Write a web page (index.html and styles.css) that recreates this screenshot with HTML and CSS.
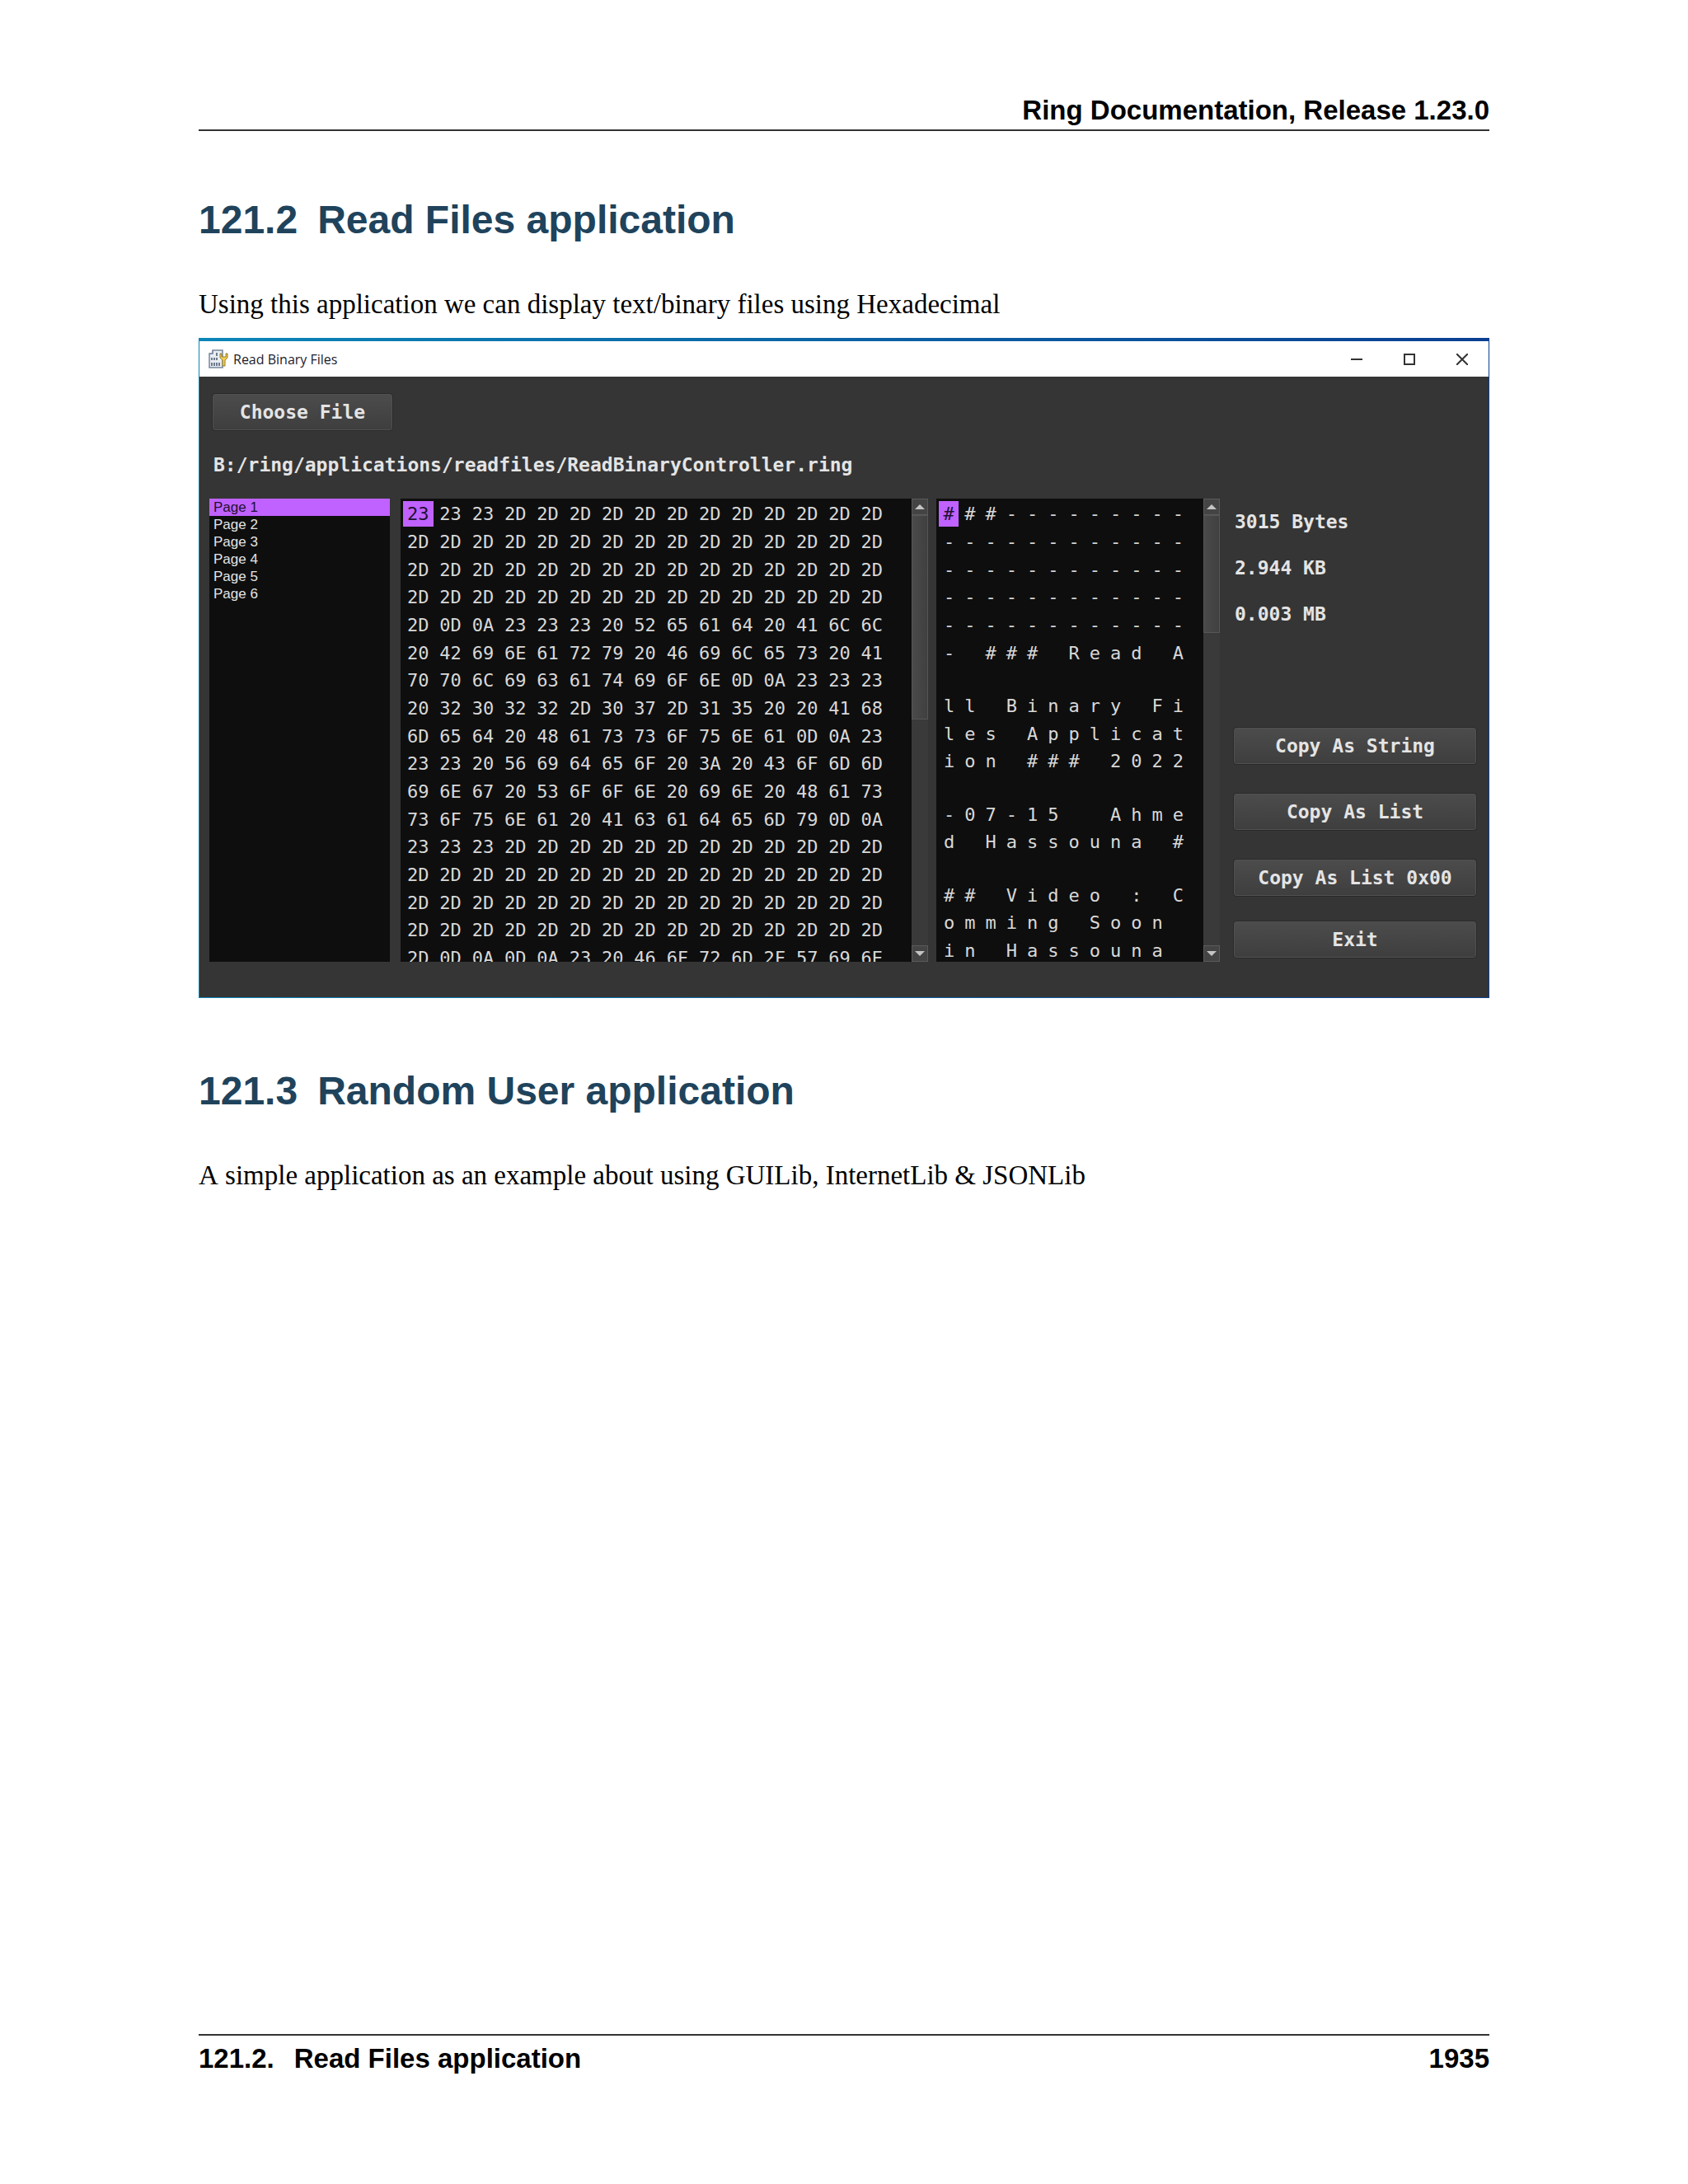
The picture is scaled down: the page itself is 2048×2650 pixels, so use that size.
FILE: index.html
```html
<!DOCTYPE html>
<html lang="en">
<head>
<meta charset="utf-8">
<title>Ring Documentation, Release 1.23.0</title>
<link rel="stylesheet" href="styles.css">
</head>
<body>
<div class="page">
  <header class="page-header">Ring Documentation, Release 1.23.0</header>
  <main class="content">
    <section>
      <h2><span class="number">121.2</span>Read Files application</h2>
      <p>Using this application we can display text/binary files using Hexadecimal</p>
      <div class="window">
        <div class="titlebar">
          <svg class="app-icon" viewBox="0 0 24 24" width="24" height="24" aria-hidden="true">
            <path d="M5 1h12v21H1V5h4z" fill="#e9edf3" stroke="#76869c" stroke-width="1.5"/>
            <path d="M1 5h4V1" fill="none" stroke="#76869c"/>
            <path d="M10 4v4M4 10v3M7 10v3M10 10v3M4 16v4M7 16v4M10 16v4M13 16v4" stroke="#46566b" stroke-width="1.5"/>
            <path d="M14 5v5l3 3v7h3v-7l3-3V5h-2v4h-5V5z" fill="#f2cf4a" stroke="#927c36"/>
          </svg>
          <span class="title">Read Binary Files</span>
          <button class="caption" aria-label="Minimize"><svg viewBox="0 0 14 14" width="14" height="14"><path d="M0 7h14"/></svg></button>
          <button class="caption" aria-label="Maximize"><svg viewBox="0 0 14 14" width="14" height="14"><path d="M1 1h12v12H1z"/></svg></button>
          <button class="caption" aria-label="Close"><svg viewBox="0 0 14 14" width="14" height="14"><path d="M0 0l14 14M14 0L0 14"/></svg></button>
        </div>
        <div class="client">
          <button class="push choose">Choose File</button>
          <div class="path">B:/ring/applications/readfiles/ReadBinaryController.ring</div>
          <div class="workspace">
            <ul class="pages">
              <li class="selected">Page 1</li><li>Page 2</li><li>Page 3</li><li>Page 4</li><li>Page 5</li><li>Page 6</li>
            </ul>
            <div class="pane">
              <div class="view hex-view"><table class="dump hex" id="hex"></table></div>
              <div class="scrollbar"><button class="arrow up" aria-label="Scroll up"></button><div class="track"><div class="thumb hex-thumb"></div></div><button class="arrow down" aria-label="Scroll down"></button></div>
            </div>
            <div class="pane">
              <div class="view ascii-view"><table class="dump ascii" id="ascii"></table></div>
              <div class="scrollbar"><button class="arrow up" aria-label="Scroll up"></button><div class="track"><div class="thumb ascii-thumb"></div></div><button class="arrow down" aria-label="Scroll down"></button></div>
            </div>
            <div class="side">
              <div class="sizes"><span>3015 Bytes</span><span>2.944 KB</span><span>0.003 MB</span></div>
              <div class="actions">
                <button class="push">Copy As String</button>
                <button class="push">Copy As List</button>
                <button class="push">Copy As List 0x00</button>
              </div>
              <button class="push exit">Exit</button>
            </div>
          </div>
        </div>
      </div>
    </section>
    <section>
      <h2><span class="number">121.3</span>Random User application</h2>
      <p>A simple application as an example about using GUILib, InternetLib &amp; JSONLib</p>
    </section>
  </main>
  <footer class="page-footer"><span><span class="number">121.2.</span>Read Files application</span><span>1935</span></footer>
</div>
<script src="dump.js"></script>
</body>
</html>
```
FILE: styles.css
```css
* { box-sizing: border-box; }
body { margin: 0; background: #fff; color: #000; font-kerning: none; }
button { margin: 0; padding: 0; border: 0; font: inherit; color: inherit; background: none; }
.page { display: flex; flex-direction: column; min-height: 100vh; padding: 114px 241px 132px; }
.page-header, .page-footer { font: bold 33px/40px "Liberation Sans", sans-serif; font-kerning: none; }
.page-header { text-align: right; padding-bottom: 3px; border-bottom: 2px solid #333; }
.page-footer { display: flex; justify-content: space-between; margin-top: auto; padding-top: 8px; border-top: 2px solid #333; }
.page-footer .number { margin-right: 24px; }
h2 { margin: 80px 0 54px; font: bold 48px/56px "Liberation Sans", sans-serif; font-kerning: none; color: #20435c; }
h2 .number { margin-right: 24px; }
p { margin: 0 0 21px; font: 33px/40px "Liberation Serif", serif; font-kerning: none; }

.window { margin-bottom: 85px; border: 1px solid #2c6f80; border-top: 4px solid #0a6fb4; border-right-color: #2c5a9c; border-bottom-color: #444; border-image: linear-gradient(90deg, #0b86b8, #0a3f92) 4 1 1 1; }
.titlebar { display: flex; align-items: center; height: 43px; padding: 0 11px; background: #fff; font: 16px/20px "Open Sans", sans-serif; color: #1c1c2c; }
.title { flex: 1; margin-left: 6px; }
.caption { width: 64px; height: 43px; display: flex; align-items: center; justify-content: center; }
.caption:last-child { margin-right: -11px; }
.caption path { fill: none; stroke: #333; stroke-width: 2; }
.client { padding: 20px 14px 43px 12px; background: #353535; color: #e4e4e4; font: bold 23px/28px "DejaVu Sans Mono", monospace; }
.push { height: 46px; border: 1px solid #2a2a2a; border-radius: 4px; background: linear-gradient(#4c4c4c, #3e3e3e); box-shadow: inset 0 0 0 1px #505050; }
.choose { display: block; width: 220px; margin-left: 3px; }
.path { margin: 27px 0 27px 5px; }
.workspace { display: grid; grid-template-columns: 222px 640fr 344fr 302px; column-gap: 10px; height: 562px; }
.pages { margin: 0 3px 0 0; padding: 0; list-style: none; background: #0e0e0e; font: 17px/21px "Liberation Sans", sans-serif; }
.pages li { padding-left: 5px; }
.pages .selected { background: #c062ff; color: #201030; }
.pane { display: flex; min-width: 0; min-height: 0; background: #0e0e0e; }
.view { flex: 1; min-width: 0; overflow: hidden; padding: 2px 0 0 3px; }
.hex-view { padding-right: 27px; }
.ascii-view { padding-right: 18px; }
.dump { width: 100%; table-layout: fixed; border-collapse: collapse; font: 22px/31px "DejaVu Sans Mono", monospace; color: #d8d8d8; }
.dump td { height: 34px; padding: 1px 0 0; vertical-align: top; white-space: nowrap; }
.dump tr:nth-child(3n) td { height: 33px; }
.dump .blank td { height: 31px; }
.dump mark { display: block; height: 31px; background: #c062ff; color: #201030; }
.hex td { padding-left: 5px; }
.hex td.marked { padding-left: 0; }
.hex mark { width: 37px; padding-left: 5px; }
.ascii td { text-align: center; }
.ascii mark { width: 24px; }
.scrollbar { display: flex; flex-direction: column; width: 20px; background: #3a3a3a; }
.arrow { height: 20px; display: flex; align-items: center; justify-content: center; border: 1px solid #5a5a5a; background: #444; }
.arrow::before { content: ""; border: 6px solid transparent; }
.up::before { border-top: 0; border-bottom-color: #c4c4c4; }
.down::before { border-bottom: 0; border-top-color: #c4c4c4; }
.track { flex: 1; }
.thumb { border: 1px solid #565656; background: linear-gradient(90deg, #4a4a4a, #404040); }
.hex-thumb { height: 248px; }
.ascii-thumb { height: 143px; }
.side { display: flex; flex-direction: column; margin-left: 6px; padding-bottom: 4px; }
.sizes { display: flex; flex-direction: column; gap: 28px; padding: 14px 0 0 2px; }
.actions { display: flex; flex-direction: column; gap: 34px; margin-top: auto; }
.exit { margin-top: 29px; }
```
FILE: dump.js
```js
// File bytes, fifteen to a row, and the same bytes as text, twelve to a row.
const dashes = Array(15).fill("2D").join(" ");
const hexRows = [
  "23 23 23 2D 2D 2D 2D 2D 2D 2D 2D 2D 2D 2D 2D",
  dashes, dashes, dashes,
  "2D 0D 0A 23 23 23 20 52 65 61 64 20 41 6C 6C",
  "20 42 69 6E 61 72 79 20 46 69 6C 65 73 20 41",
  "70 70 6C 69 63 61 74 69 6F 6E 0D 0A 23 23 23",
  "20 32 30 32 32 2D 30 37 2D 31 35 20 20 41 68",
  "6D 65 64 20 48 61 73 73 6F 75 6E 61 0D 0A 23",
  "23 23 20 56 69 64 65 6F 20 3A 20 43 6F 6D 6D",
  "69 6E 67 20 53 6F 6F 6E 20 69 6E 20 48 61 73",
  "73 6F 75 6E 61 20 41 63 61 64 65 6D 79 0D 0A",
  "23 23 23 2D 2D 2D 2D 2D 2D 2D 2D 2D 2D 2D 2D",
  dashes, dashes, dashes,
  "2D 0D 0A 0D 0A 23 20 46 6F 72 6D 2F 57 69 6E"
].map(row => row.split(" "));
const asciiRows = [
  "###---------", "------------", "------------", "------------", "------------",
  "- ### Read A", "", "ll Binary Fi", "les Applicat", "ion ### 2022", "",
  "-07-15  Ahme", "d Hassouna #", "", "## Video : C", "omming Soon ", "in Hassouna "
].map(row => row.split(""));

function fill(id, rows, columns) {
  const table = document.getElementById(id);
  rows.forEach((cells, r) => {
    const tr = table.insertRow();
    if (!cells.length) tr.className = "blank";
    for (let c = 0; c < columns; c++) {
      const td = tr.insertCell();
      if (r === 0 && c === 0) {
        td.className = "marked";
        td.appendChild(document.createElement("mark")).textContent = cells[0];
      } else {
        td.textContent = cells[c] || "";
      }
    }
  });
}
fill("hex", hexRows, 15);
fill("ascii", asciiRows, 12);
```
